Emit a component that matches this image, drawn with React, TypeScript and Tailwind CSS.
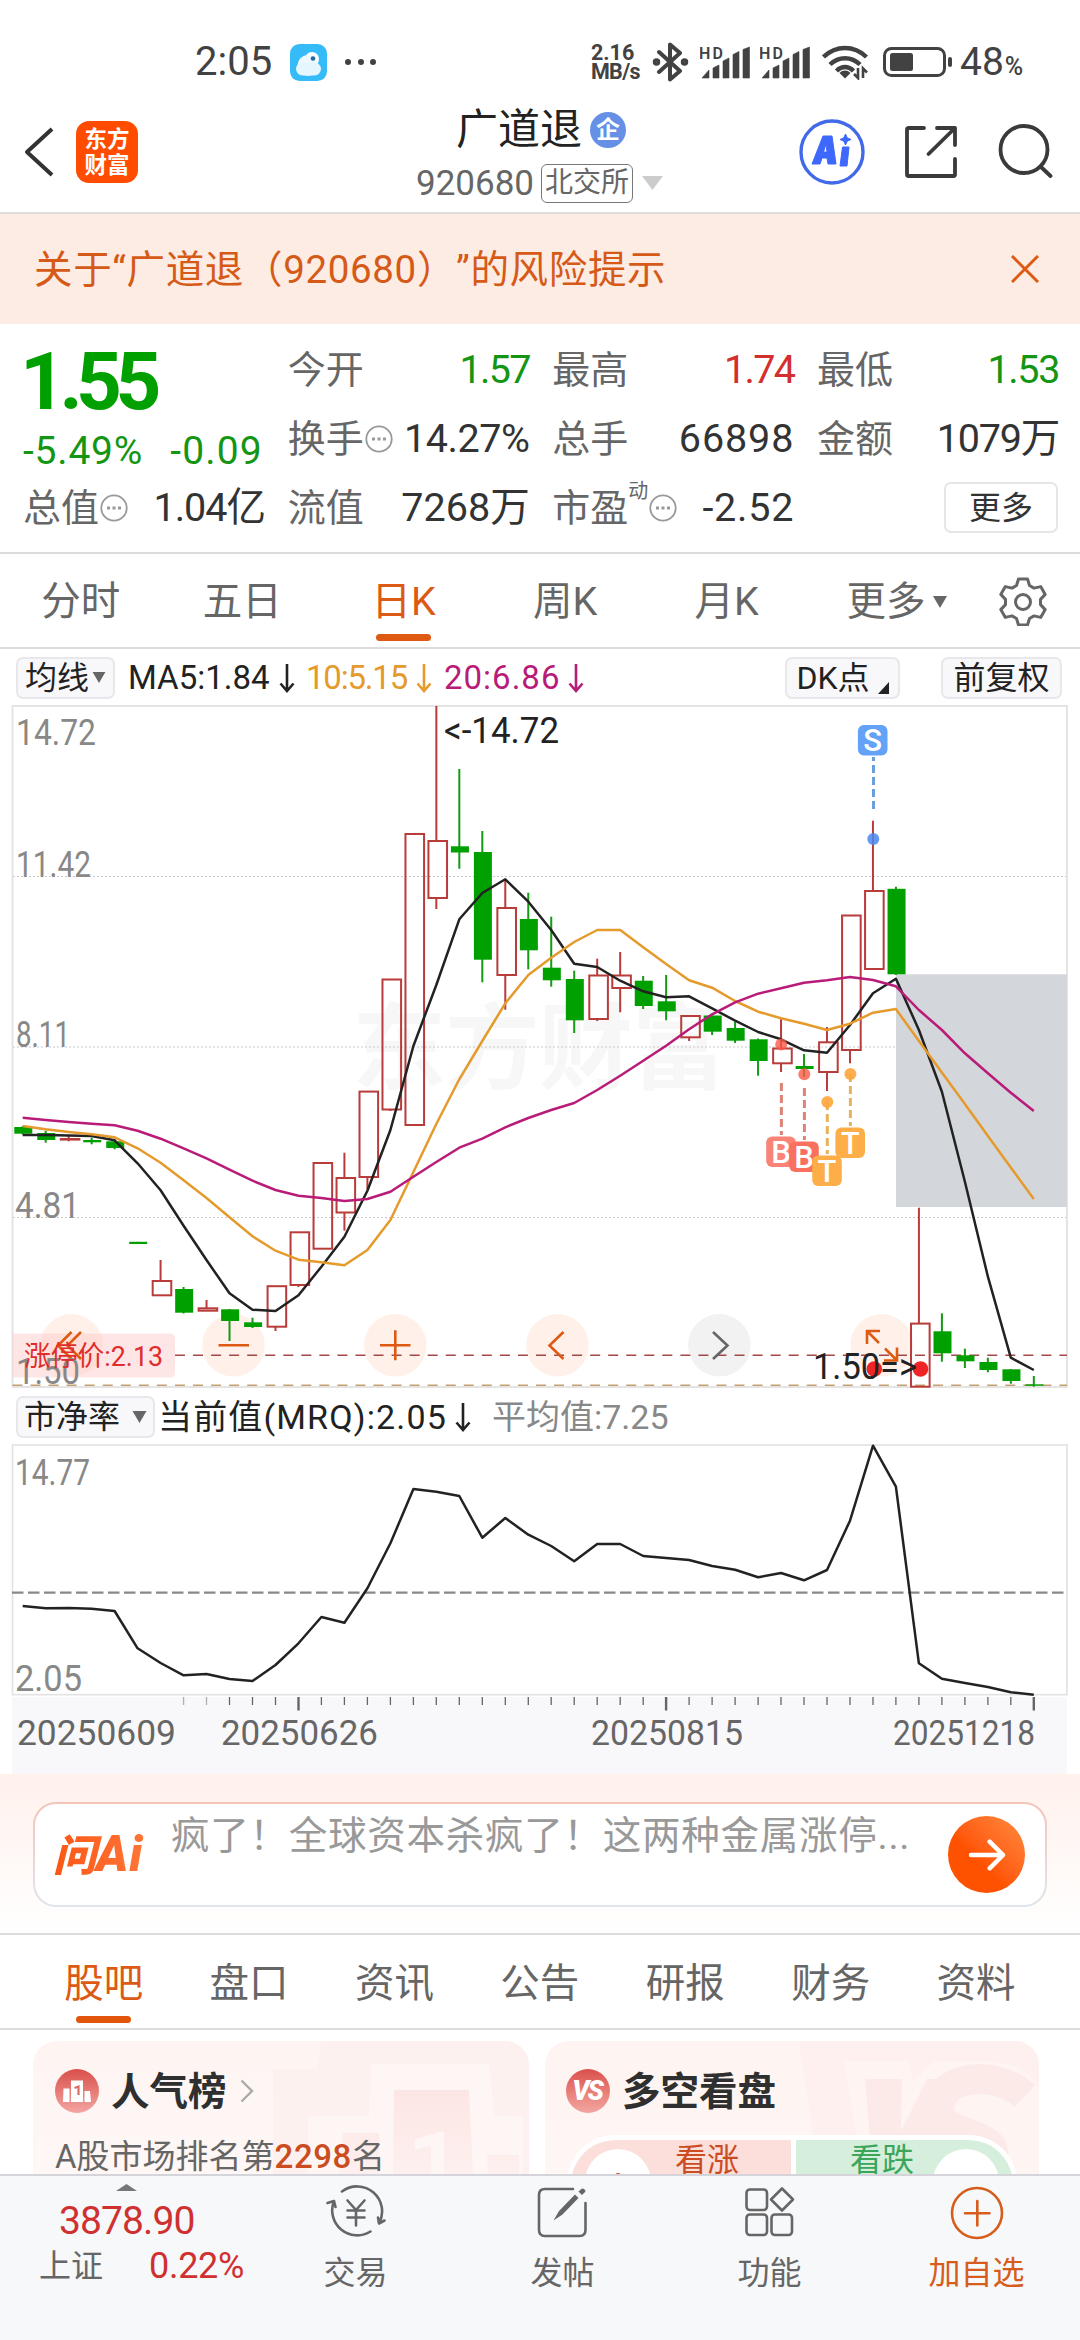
import React from 'react';

type Candle = ['r' | 'g', number, number, number, number];

// [direction, wick top, body top, body bottom, wick bottom]
const CANDLES: Candle[] = [
  ['g', 1126, 1127, 1133.7, 1134.5],
  ['g', 1130.7, 1133, 1140, 1142.7],
  ['r', 1135.6, 1138, 1140, 1141.3],
  ['g', 1137.7, 1140, 1142.3, 1144.3],
  ['g', 1139, 1141.3, 1148, 1149.3],
  ['g', 1241.8, 1241.8, 1244, 1244],
  ['r', 1260, 1280, 1296.3, 1296],
  ['g', 1287, 1289, 1312.7, 1313.5],
  ['r', 1300, 1307.3, 1311.7, 1311],
  ['g', 1309, 1309.3, 1321, 1341],
  ['g', 1317.7, 1322.3, 1327, 1328],
  ['r', 1286, 1285.2, 1327.7, 1331],
  ['r', 1232, 1231.3, 1286, 1287],
  ['r', 1163, 1162, 1249.7, 1249],
  ['r', 1152.7, 1177, 1213.5, 1230.7],
  ['r', 1091, 1090.6, 1178, 1189],
  ['r', 979, 978.5, 1110.5, 1111],
  ['r', 834, 833, 1126, 1125],
  ['r', 706, 840, 899, 909],
  ['g', 769, 846.3, 852.5, 868.7],
  ['g', 831, 852, 959.7, 982.3],
  ['r', 879.3, 907, 976, 1009.7],
  ['g', 892.7, 919, 950.3, 969.3],
  ['g', 916.7, 967.7, 980.3, 986.7],
  ['g', 970.7, 979, 1020.3, 1033],
  ['r', 958.7, 974.5, 1020, 1021],
  ['r', 952, 974.5, 989, 1012.3],
  ['g', 976, 980.7, 1006, 1009],
  ['g', 975, 1001.3, 1011.3, 1020.3],
  ['r', 1015.5, 1015, 1038.3, 1041],
  ['g', 1015.3, 1015.5, 1031.7, 1035],
  ['g', 1022, 1028, 1040.7, 1043],
  ['g', 1038.5, 1039.3, 1061, 1075.7],
  ['r', 1018.3, 1047.5, 1064.3, 1072],
  ['g', 1054, 1066, 1069, 1077],
  ['r', 1027, 1041.3, 1073, 1091],
  ['r', 915, 914.5, 1051, 1063.3],
  ['r', 820.7, 890, 970, 969],
  ['g', 886.7, 888.8, 974.3, 975],
  ['r', 1207.7, 1322.6, 1387.7, 1387],
  ['g', 1313.3, 1331.3, 1353.3, 1361.7],
  ['g', 1348.7, 1355.3, 1361.3, 1368],
  ['g', 1357.7, 1362, 1370, 1372.3],
  ['g', 1369, 1369.3, 1381, 1383.7],
  ['g', 1376, 1384.3, 1385.8, 1386.7],
];

const MA5 = [1135, 1135, 1135.5, 1136, 1140.3, 1163.3, 1190.3, 1225.7, 1260, 1293.3, 1309.7, 1311, 1295.3, 1266.7, 1236.7, 1190.7, 1130, 1046, 985, 919.3, 893, 879.3, 901.7, 930, 963.7, 967, 980.7, 991.3, 997.3, 996.3, 1008.3, 1020.7, 1032, 1039.3, 1050.3, 1052.7, 1025, 993.3, 978.7, 1030, 1091.7, 1181.7, 1276.7, 1357.7, 1370];
const MA10 = [1126, 1129.3, 1132, 1134.3, 1137.3, 1148.3, 1162.7, 1180.3, 1198, 1217.3, 1236.3, 1250.7, 1259.7, 1262.3, 1265.3, 1250, 1220, 1172, 1124, 1079.3, 1041, 1003.3, 975, 957.7, 942, 930, 930, 947.3, 964, 980.3, 987.7, 1001, 1011.7, 1018.3, 1023.7, 1030, 1023.7, 1012.7, 1009, 1041, 1072.5, 1104, 1136, 1167.5, 1199];
const MA20 = [1117.7, 1120, 1122, 1123.7, 1125.3, 1130.7, 1138.7, 1148.3, 1158.3, 1169.7, 1180.7, 1190, 1195.7, 1198, 1201, 1199, 1191.7, 1176.7, 1162, 1147.7, 1138.7, 1127.3, 1118, 1110, 1103, 1090, 1075.7, 1060.7, 1045.7, 1029.3, 1014.3, 1002.3, 993.7, 988.3, 982.7, 980.3, 977, 980, 986.3, 1010, 1030, 1053.3, 1073.3, 1092.7, 1111];
const PB = [1606, 1608.3, 1608, 1608.7, 1611, 1648.3, 1663, 1675.3, 1674, 1679, 1681, 1665, 1643.3, 1617, 1622.7, 1588.3, 1543.3, 1489, 1491.7, 1496, 1537.7, 1518, 1534.7, 1546, 1561.3, 1544, 1544, 1556, 1558, 1560, 1566, 1569.7, 1577.3, 1573, 1580.3, 1570, 1520.7, 1445.7, 1486.7, 1663.3, 1678.7, 1683, 1687, 1692.3, 1694.7];

const cx = (i: number) => 22.7 + 22.98 * i;
const line = (ys: number[]) => ys.map((y, i) => `${cx(i).toFixed(1)},${y}`).join(' ');

const FONT = 'Roboto, "Noto Sans CJK SC", sans-serif';

function Label({ x, y, w, size = 36, fill = '#888888', children }: { x: number; y: number; w: number; size?: number; fill?: string; children: string }) {
  return (
    <text x={x} y={y} textLength={w} lengthAdjust="spacingAndGlyphs" fontSize={size} fill={fill}>
      {children}
    </text>
  );
}

function Marker({ x, y, letter, color }: { x: number; y: number; letter: string; color: string }) {
  return (
    <g>
      <rect x={x - 14.8} y={y - 15} width="29.6" height="30.5" rx="6" fill={color} />
      <text x={x} y={y + 11} textAnchor="middle" fontSize="31" fontWeight="500" fill="#fff">{letter}</text>
    </g>
  );
}

function KChart() {
  return (
    <svg className="block h-[684px] w-[1080px]" viewBox="0 705 1080 684" fontFamily={FONT}>
      <text x="352" y="1082" fontSize="94" fontWeight="700" fill="#f7f7f7" textLength="374">东方财富</text>
      <g stroke="#c8c8c8" strokeWidth="1" strokeDasharray="2 2">
        <path d="M13 876.5H1067M13 1047H1067M13 1217.5H1067" />
      </g>
      <rect x="12.5" y="706" width="1054.5" height="681" fill="none" stroke="#e2e2e2" strokeWidth="1.8" />
      <rect x="896" y="974.3" width="171" height="232.7" fill="#d3d6db" />

      {[71.6, 233.5, 395.3, 557.5, 881.6].map((x) => <circle key={x} cx={x} cy="1345.3" r="31.3" fill="#fff1e9" />)}
      <circle cx="719.4" cy="1345.3" r="31.3" fill="#f2f2f2" />

      <path d="M175 1355.3H1067" stroke="#a04a48" strokeWidth="1.5" strokeDasharray="10 8.05" />
      <path d="M12.500 1333.500H170q5 0 5 5V1372.500q0 5-5 5H12.500z" fill="#ffc4c4" fillOpacity="0.42" />
      <path d="M12.5 1385.3H1067" stroke="#c4a070" strokeWidth="1.5" strokeDasharray="10 8.05" />

      <g fill="none" stroke="#de5a12" strokeWidth="2.6">
        <path d="M71.500 1332l-13.500 13.500 13.500 13.500M81 1332l-13.500 13.500 13.500 13.500" />
        <path d="M218.500 1345.300h30.500M380 1345.300h30.500M395.300 1330.300v30" />
        <path d="M563.500 1332l-14 13.500 14 13.500" />
        <path d="M713 1332l14.500 13.500-14.500 13.500" stroke="#666" />
        <path d="M880 1331h-13v13M867 1331l12 12M884 1360.500h13v-13M897 1360.500l-12-12" />
      </g>

      <Label x={16} y={745} w={80}>14.72</Label>
      <Label x={16} y={877} w={75}>11.42</Label>
      <Label x={16} y={1047} w={54}>8.11</Label>
      <Label x={15} y={1218} w={65}>4.81</Label>
      <Label x={16} y={1384} w={64}>1.50</Label>

      {CANDLES.map(([c, hi, top, bot, lo], i) => {
        const x = cx(i);
        if (c === 'g') {
          return (
            <g key={i} fill="#00a000">
              <rect x={x - 1} y={hi} width="2" height={lo - hi} fill="#149a14" />
              <rect x={x - 8.4} y={top} width="18" height={bot - top} />
            </g>
          );
        }
        return (
          <g key={i} stroke="#b83c3a" strokeWidth="2" fill="none">
            {hi < top && <path d={`M${x} ${hi}V${top + 1}`} />}
            {lo > bot && <path d={`M${x} ${bot - 1}V${lo}`} />}
            <rect x={x - 7.9} y={top + 1} width="18.6" height={Math.max(bot - top - 2, 0.6)} />
          </g>
        );
      })}

      <g fill="none" strokeWidth="2.5" strokeLinejoin="round">
        <polyline points={line(MA5)} stroke="#222" />
        <polyline points={line(MA10)} stroke="#e59a2c" />
        <polyline points={line(MA20)} stroke="#b81b78" />
      </g>

      <path d="M873.500 757V809" stroke="#6a9fdd" strokeWidth="3" strokeDasharray="8 4" strokeDashoffset="4" />
      <circle cx="873.300" cy="839" r="6" fill="#4a87ee" fillOpacity="0.85" />
      <Marker x={872.7} y={740} letter="S" color="#64a2f8" />

      <g strokeWidth="3" strokeDasharray="8 4">
        <path d="M781.400 1083V1135M804.400 1088V1140" stroke="#df8276" />
        <path d="M827.300 1102V1154M850.400 1074V1126" stroke="#e8b25c" />
      </g>
      <circle cx="781.200" cy="1044.500" r="6" fill="#fa5a48" fillOpacity="0.8" />
      <circle cx="804.300" cy="1074.300" r="6" fill="#fa5a48" fillOpacity="0.8" />
      <circle cx="827.300" cy="1102" r="6" fill="#fda63c" fillOpacity="0.9" />
      <circle cx="850.400" cy="1074" r="6" fill="#fda63c" fillOpacity="0.9" />
      <Marker x={781} y={1151.5} letter="B" color="#f98377" />
      <Marker x={804} y={1156.5} letter="B" color="#f9705f" />
      <Marker x={827} y={1170.5} letter="T" color="#feae48" />
      <Marker x={850.2} y={1142.5} letter="T" color="#feae48" />

      <Label x={444} y={743} w={115} fill="#222">&lt;-14.72</Label>
      <circle cx="874.300" cy="1369" r="7.800" fill="#f02424" />
      <circle cx="920.500" cy="1369" r="7.800" fill="#f02424" />
      <Label x={813} y={1379} w={104} fill="#222">1.50=&gt;</Label>
      <Label x={24} y={1366} w={139} size={28} fill="#e02c2c">涨停价:2.13</Label>
    </svg>
  );
}

function PbChart() {
  return (
    <svg className="block h-[330px] w-[1080px]" viewBox="0 1444 1080 330" fontFamily={FONT}>
      <rect x="12" y="1697" width="1055" height="77" fill="#f8f8fb" />
      <rect x="12.500" y="1445" width="1054.500" height="249.700" fill="none" stroke="#e2e2e2" strokeWidth="1.600" />
      <path d="M12 1592.700H1067" stroke="#888" strokeWidth="2.200" strokeDasharray="11.500 4.500" />
      <Label x={15} y={1485} w={75}>14.77</Label>
      <Label x={15} y={1691} w={67}>2.05</Label>
      <polyline points={line(PB)} fill="none" stroke="#222" strokeWidth="2.500" strokeLinejoin="round" />
      {PB.map((_, i) => {
        if (i < 7) return null;
        const big = i === 12 || i === 28 || i === 44;
        return <path key={i} d={`M${cx(i).toFixed(1)} 1697V${big ? 1710.5 : 1705}`} stroke="#666" strokeWidth={big ? 2.4 : 1.3} opacity={i < 9 ? 0.5 : 1} />;
      })}
      <Label x={17} y={1745} w={159} size={35} fill="#666">20250609</Label>
      <Label x={221} y={1745} w={157} size={35} fill="#666">20250626</Label>
      <Label x={591} y={1745} w={152} size={35} fill="#666">20250815</Label>
      <Label x={893} y={1745} w={142} size={35} fill="#666">20251218</Label>
    </svg>
  );
}

function Signal({ className }: { className: string }) {
  return (
    <svg className={`h-[36px] w-[50px] shrink-0 ${className}`} viewBox="0 0 50 36" fill="#424242">
      <text x="-1" y="14.500" fontSize="16" fontWeight="600" fontFamily="Roboto" textLength="24">HD</text>
      <path d="M2 34l7-8v8zM13 34V24l6-3v13zM23 34V17l6-3v20zM33 34V10.500l6-3V34zM43 34V5.500L49.500 3V34z" stroke="#424242" strokeWidth=".6" strokeLinejoin="round" />
    </svg>
  );
}

function StatusBar() {
  return (
    <div className="flex h-[48px] items-center text-[#424242]">
      <div className="ml-[195px] w-[77px] text-[40px] leading-none">2:05</div>
      <svg className="ml-[18px] h-[37px] w-[37px]" viewBox="0 0 37 37">
        <rect width="37" height="37" rx="9.500" fill="#35bcf8" />
        <circle cx="22" cy="15" r="7" fill="#fff" />
        <circle cx="18" cy="21.500" r="10.500" fill="#eef9ff" />
        <rect x="6" y="18.500" width="25" height="13" rx="6.500" fill="#e6f6fe" />
        <circle cx="23" cy="14.500" r="2.300" fill="#226a9a" />
      </svg>
      <div className="ml-[18px] flex w-[31px] justify-between">
        <i className="size-[6px] rounded-full bg-[#424242]" />
        <i className="size-[6px] rounded-full bg-[#424242]" />
        <i className="size-[6px] rounded-full bg-[#424242]" />
      </div>
      <div className="ml-[215px] w-[61px] text-[21.500px] leading-[19px] font-bold">
        <div>2.16</div>
        <div className="tracking-[-0.700px]">MB/s</div>
      </div>
      <svg className="h-[40px] w-[37px] shrink-0" viewBox="0 0 37 40" fill="none" stroke="#424242" strokeWidth="4" strokeLinejoin="round" strokeLinecap="round">
        <path d="M7 10l21 19-10 8.500V2.500L28 11 7 30" />
        <circle cx="4.500" cy="20" r="2" strokeWidth="3.500" />
        <circle cx="32.500" cy="20" r="2" strokeWidth="3.500" />
      </svg>
      <Signal className="ml-[11px]" />
      <Signal className="ml-[10px]" />
      <svg className="ml-[12px] h-[36px] w-[48px] shrink-0" viewBox="0 0 48 36" fill="none" stroke="#424242" strokeWidth="4.500">
        <path d="M1.500 13C14 1 32 1 44.500 13M8 20.500c8.500-8.500 21.500-8.500 30 0M14.500 27c5-5.200 12-5.200 17 0" />
        <path d="M17.500 29c3-3.300 8-3.300 11 0L23 34.500z" fill="#424242" stroke="none" />
        <path d="M36 24v10l-4-4M41 34V24.500l4 4" strokeWidth="2.600" />
      </svg>
      <svg className="ml-[13px] h-[30px] w-[70px] shrink-0" viewBox="0 0 70 30">
        <rect x="1.500" y="1.500" width="60" height="27" rx="7" fill="none" stroke="#424242" strokeWidth="3" />
        <rect x="7" y="6" width="23" height="18" rx="2.500" fill="#424242" />
        <rect x="65" y="10" width="4" height="10" rx="2" fill="#424242" />
      </svg>
      <div className="ml-[7px] flex items-baseline leading-none">
        <span className="text-[39px]">48</span>
        <span className="ml-[1px] text-[25px] font-medium">%</span>
      </div>
    </div>
  );
}

function Header() {
  return (
    <header className="h-[214px] border-b-2 border-[#dcdcdc] bg-white pt-[38px]">
      <StatusBar />
      <div className="mt-[12px] flex h-[108px] items-center">
        <svg className="ml-[24px] h-[50px] w-[30px]" viewBox="0 0 30 50" fill="none" stroke="#333" strokeWidth="4" strokeLinejoin="round">
          <path d="M28 2L3 25l25 23" />
        </svg>
        <div className="ml-[22px] flex size-[62px] flex-col items-center justify-center rounded-[13px] bg-[#ff4c00] text-[22.500px] leading-[26px] font-bold text-white">
          <span>东方</span>
          <span>财富</span>
        </div>
        <div className="ml-[278px] w-[383px]">
          <div className="flex h-[60px] items-center pt-[3px] pl-[40px]">
            <span className="text-[42px] leading-none text-[#222]">广道退</span>
            <span className="ml-[8px] flex size-[36px] items-center justify-center rounded-full bg-[#6590e6] text-[24px] leading-none font-bold text-white">企</span>
          </div>
          <div className="flex h-[48px] items-center pt-[2px]">
            <span className="w-[125px] text-[35px] leading-none text-[#666]">920680</span>
            <span className="flex h-[39px] w-[92px] items-center justify-center rounded-[6px] border-[1.5px] border-[#777] text-[28px] leading-none text-[#666]">北交所</span>
            <svg className="ml-[9px] h-[14px] w-[21px]" viewBox="0 0 21 14"><path d="M0 0h21L10.500 14z" fill="#ccc" /></svg>
          </div>
        </div>
        <svg className="h-[66px] w-[66px] shrink-0" viewBox="0 0 66 66">
          <circle cx="33" cy="33" r="31" fill="#fff" stroke="#4169e8" strokeWidth="3.400" />
          <path fillRule="evenodd" d="M13 45L24 17h9l4 28h-8l-1-6h-5l-2 6zM24.500 33h3.500l-1-8z" fill="#3d68fb" stroke="#3d68fb" strokeWidth="1" strokeLinejoin="round" />
          <path d="M43.500 28h6.500l-2 19h-7zM46.500 15l1.700 3.800L52 20.500l-3.800 1.700L46.500 26l-1.700-3.800L41 20.500l3.800-1.700z" fill="#3d68fb" stroke="#3d68fb" strokeWidth="1" strokeLinejoin="round" />
        </svg>
        <svg className="ml-[39px] h-[56px] w-[56px] shrink-0" viewBox="0 0 56 56" fill="none" stroke="#3a3a3a" strokeWidth="3.800" strokeLinecap="round" strokeLinejoin="round">
          <path d="M20 4H4.500q-1.500 0-1.500 1.500V50.500q0 1.500 1.500 1.500H49.500q1.500 0 1.500-1.500V35M33 4H51V21M51 4L24.500 30" />
        </svg>
        <svg className="ml-[37px] h-[56px] w-[56px] shrink-0" viewBox="0 0 56 56" fill="none" stroke="#3a3a3a" strokeWidth="3.800" strokeLinecap="round">
          <circle cx="27" cy="25.500" r="23.500" />
          <path d="M43.500 42.500l10 9.500" />
        </svg>
      </div>
    </header>
  );
}

function Dots() {
  return (
    <svg className="ml-[1px] h-[28px] w-[28px] shrink-0" viewBox="0 0 28 28">
      <circle cx="14" cy="14" r="12.700" fill="none" stroke="#999" strokeWidth="1.800" />
      <path d="M7 12.500h3v3H7zM12.500 12.500h3v3h-3zM18 12.500h3v3h-3z" fill="#999" />
    </svg>
  );
}

function Quote({ label, value, tone = 'text-[#333]', dots, sup, spacing = '' }: { label: string; value: string; tone?: string; dots?: boolean; sup?: string; spacing?: string }) {
  return (
    <div className="flex h-[69px] items-center justify-between whitespace-nowrap leading-none">
      <span className="flex items-center text-[38px] text-[#666]">
        {label}
        {sup && <span className="mb-[34px] text-[20px]">{sup}</span>}
        {dots && <Dots />}
      </span>
      <span className={`-mr-[2px] text-[39.500px] ${tone} ${spacing}`}>{value}</span>
    </div>
  );
}

function Quotes() {
  return (
    <section className="grid h-[230px] grid-cols-[240px_240px_240px_240px] justify-between border-b-2 border-[#dcdcdc] bg-white px-[23px] pt-[11px]">
      <div>
        <div className="-ml-[3px] flex h-[94px] items-center text-[80px] leading-none font-bold tracking-[-6.500px] text-[#00a000]">1.55</div>
        <div className="flex h-[44px] items-center justify-between text-[39px] leading-none text-[#149614]">
          <span className="tracking-[0.800px]">-5.49%</span>
          <span className="tracking-[1.200px]">-0.09</span>
        </div>
        <Quote label="总值" value="1.04亿" spacing="tracking-[-1px]" dots />
      </div>
      <div>
        <Quote label="今开" value="1.57" tone="text-[#149614]" spacing="tracking-[-1.700px]" />
        <Quote label="换手" value="14.27%" spacing="tracking-[-0.400px]" dots />
        <Quote label="流值" value="7268万" />
      </div>
      <div>
        <Quote label="最高" value="1.74" tone="text-[#d32f2f]" spacing="tracking-[-1.700px]" />
        <Quote label="总手" value="66898" spacing="tracking-[0.900px]" />
        <Quote label="市盈" sup="动" value="-2.52" spacing="tracking-[0.800px]" dots />
      </div>
      <div>
        <Quote label="最低" value="1.53" tone="text-[#149614]" spacing="tracking-[-1.400px]" />
        <Quote label="金额" value="1079万" spacing="tracking-[-1.200px]" />
        <div className="flex h-[69px] items-center justify-end">
          <span className="-mr-px flex h-[51px] w-[114px] items-center justify-center rounded-[7px] border-2 border-[#e6e6e6] text-[32px] leading-none text-[#333]">更多</span>
        </div>
      </div>
    </section>
  );
}

const PERIODS = ['分时', '五日', '日K', '周K', '月K'];

function Periods() {
  return (
    <nav className="flex h-[95px] border-b-2 border-[#dcdcdc] bg-white text-[39.500px] leading-none text-[#666]">
      {PERIODS.map((p) => (
        <div key={p} className={`flex w-[161.500px] flex-col items-center pt-[28px] ${p === '日K' ? 'text-[#dc5a14]' : ''}`}>
          <span className="h-[52px]">{p}</span>
          {p === '日K' && <i className="h-[7px] w-[55px] rounded-full bg-[#de5a12]" />}
        </div>
      ))}
      <div className="flex h-[96px] w-[190px] items-center pl-[39px]">
        更多
        <svg className="ml-[7px] h-[12px] w-[14px]" viewBox="0 0 14 12"><path d="M0 0h14L7 12z" fill="#666" /></svg>
      </div>
      <svg className="mt-[22px] h-[50px] w-[50px]" viewBox="0 0 50 50" fill="none" stroke="#666" strokeWidth="3" strokeLinejoin="round">
        <path d="M20.500 3h9l2 6.500 4.500 2.600 6.700-1.500 4.500 7.800-4.700 5v5.200l4.700 5-4.500 7.800-6.700-1.500-4.500 2.600-2 6.500h-9l-2-6.500-4.500-2.600-6.700 1.500-4.500-7.800 4.700-5v-5.200l-4.700-5 4.500-7.800 6.700 1.500 4.500-2.600z" />
        <circle cx="25" cy="26" r="7.500" />
      </svg>
    </nav>
  );
}

function Arrow({ className }: { className: string }) {
  return (
    <svg className={`h-[30px] w-[16px] shrink-0 ${className}`} viewBox="0 0 16 30" fill="none" stroke="currentColor" strokeWidth="2.600">
      <path d="M8 1v27M1.500 20.500L8 28l6.500-7.500" />
    </svg>
  );
}

const PILL = 'flex h-[42px] items-center justify-center rounded-[7px] border-2 border-[#e8e8ec] bg-[#f8f8fb] text-[32px] leading-none text-[#222]';

function Indicators() {
  return (
    <div className="flex h-[57px] items-center bg-white text-[33px] leading-none whitespace-nowrap">
      <div className={`ml-[16px] w-[99px] ${PILL}`}>
        均线<svg className="ml-[3px] h-[11px] w-[14px]" viewBox="0 0 14 12"><path d="M0 0h14L7 12z" fill="#666" /></svg>
      </div>
      <span className="ml-[13px] w-[141px] text-[#222]">MA5:1.84</span>
      <Arrow className="ml-[10px] text-[#222]" />
      <span className="ml-[11px] w-[100px] tracking-[-1.2px] text-[#e59a2c]">10:5.15</span>
      <Arrow className="ml-[10px] text-[#e59a2c]" />
      <span className="ml-[12px] w-[115px] tracking-[1px] text-[#b81b78]">20:6.86</span>
      <Arrow className="ml-[9px] text-[#b81b78]" />
      <div className={`ml-[201px] w-[115px] ${PILL}`}>
        DK点<svg className="mt-[20px] ml-[8px] h-[12px] w-[11px]" viewBox="0 0 11 12"><path d="M11 0v12H0z" fill="#222" /></svg>
      </div>
      <div className={`ml-[41px] w-[121px] ${PILL}`}>前复权</div>
    </div>
  );
}

function PbHeader() {
  return (
    <div className="flex h-[55px] items-center bg-white text-[34px] leading-none whitespace-nowrap">
      <div className={`ml-[16px] w-[139px] ${PILL}`}>
        市净率<svg className="ml-[12px] h-[12px] w-[15px]" viewBox="0 0 14 12"><path d="M0 0h14L7 12z" fill="#666" /></svg>
      </div>
      <span className="ml-[3px] w-[291px] tracking-[1.150px] text-[#222]">当前值(MRQ):2.05</span>
      <Arrow className="ml-[6px] text-[#222]" />
      <span className="ml-[21px] text-[#888]">平均值:7.25</span>
    </div>
  );
}

function AskAi() {
  return (
    <section className="h-[160px] bg-gradient-to-b from-[#fff1ec] to-white pt-[28px]">
      <div className="mx-auto h-[105px] w-[1014px] rounded-[23px] bg-gradient-to-b from-[#f3c4b8] to-[#dfe5ee] p-[2px]">
        <div className="flex h-full items-center rounded-[21px] bg-white">
          <div className="flex w-[112px] items-baseline bg-gradient-to-r from-[#f94f08] to-[#ff7636] bg-clip-text pl-[18px] leading-none font-black text-transparent italic">
            <span className="text-[43px]">问</span>
            <span className="text-[49px] tracking-[1px]">Ai</span>
          </div>
          <div className="mb-[36px] ml-[24px] w-[748px] text-[38.500px] leading-none tracking-[0.750px] whitespace-nowrap text-[#999]">疯了！全球资本杀疯了！这两种金属涨停...</div>
          <div className="ml-[29px] flex size-[77px] items-center justify-center rounded-full bg-gradient-to-tr from-[#ff5200] from-40% to-[#ff8a3c]">
            <svg className="h-[32px] w-[40px]" viewBox="0 0 42 36" fill="none" stroke="#fff" strokeWidth="5" strokeLinecap="round" strokeLinejoin="round">
              <path d="M3 18h36M24 3l15 15-15 15" />
            </svg>
          </div>
        </div>
      </div>
    </section>
  );
}

const SECTIONS = ['股吧', '盘口', '资讯', '公告', '研报', '财务', '资料'];

function Sections() {
  return (
    <nav className="flex h-[97px] border-y-2 border-[#dcdcdc] bg-white pl-[31px] text-[39.500px] leading-none text-[#666]">
      {SECTIONS.map((s, i) => (
        <div key={s} className={`flex w-[145.400px] flex-col items-center pt-[29px] ${i === 0 ? 'text-[#dc5a14]' : ''}`}>
          <span className="h-[52px]">{s}</span>
          {i === 0 && <i className="h-[7px] w-[55px] rounded-full bg-[#e2560c]" />}
        </div>
      ))}
    </nav>
  );
}

function Cards() {
  return (
    <section className="flex h-[144px] gap-[16px] overflow-hidden bg-white px-[33px] pt-[11px]">
      <div className="relative h-[300px] w-[496px] overflow-hidden rounded-[24px] bg-gradient-to-b from-[#fef5f3] to-[#fffaf8] px-[22px] pt-[28px]">
        <svg className="absolute top-0 right-0 h-[134px] w-[256px]" viewBox="0 0 256 134">
          <defs>
            <linearGradient id="pod" x1="0" y1="0" x2="0" y2="1"><stop offset="0" stopColor="#fce6e5" /><stop offset="1" stopColor="#fdf0ee" /></linearGradient>
          </defs>
          <path d="M48 0H256V134H0V28H44z" fill="#fdf1ef" />
          <path d="M98 23H216l6 52h28v59H35V75H96z" fill="#fef6f4" />
          <path d="M121 49h75l4 85h-80zM70 92h36v42H66zM214 114h32v20h-31z" fill="url(#pod)" />
          <path d="M142 98l29-8v44h-13v-29l-16 4z" fill="#fef6f4" />
        </svg>
        <div className="relative flex h-[44px] items-center">
          <svg className="h-[44px] w-[44px]" viewBox="0 0 44 44">
            <defs><linearGradient id="redA" x1="0" y1="0" x2="0" y2="1"><stop offset="0" stopColor="#d94f4b" /><stop offset="1" stopColor="#f3a6a2" /></linearGradient></defs>
            <circle cx="22" cy="22" r="22" fill="url(#redA)" />
            <path d="M8.500 19.500h6V33H8zM16 11.500h12V33H16zM29.500 22h5.500l1 11h-6.500z" fill="#fff" />
            <path d="M19.500 19l4-1.500v8.500" fill="none" stroke="#dd6b67" strokeWidth="2.200" />
          </svg>
          <h3 className="mt-[2px] ml-[12px] text-[38.500px] leading-none font-bold text-[#2f2f2f]">人气榜</h3>
          <svg className="ml-[13px] h-[24px] w-[14px]" viewBox="0 0 14 24" fill="none" stroke="#aaa" strokeWidth="2.400"><path d="M1.500 1.500L12 12 1.500 22.500" /></svg>
        </div>
        <div className="relative mt-[27px] flex text-[33px] leading-[34px] whitespace-nowrap text-[#666]">
          A股市场排名第<b className="font-medium tracking-[0.600px] text-[#cc4c22]">2298</b>名
        </div>
      </div>
      <div className="relative h-[300px] w-[494px] overflow-hidden rounded-[24px] bg-gradient-to-b from-[#fef4f2] to-[#fffaf8] px-[21px] pt-[28px]">
        <svg className="absolute top-0 right-0 h-[134px] w-[242px]" viewBox="0 0 242 134">
          <path d="M2 0H242V134H22z" fill="#fdf0ee" />
          <path d="M47 20H112l4 20 22-20H190q40 2 52 28V134H66z" fill="#fef5f3" />
          <path d="M68 38h37l-1 52 26-52h40L118 134H76z" fill="#fceae8" />
          <path d="M228 55c-30-28-88-20-86 14 2 26 56 22 54 44-1 12-20 16-38 21" fill="none" stroke="#fceae8" strokeWidth="30" />
        </svg>
        <div className="relative flex h-[44px] items-center">
          <div className="flex size-[44px] items-center justify-center rounded-full bg-gradient-to-b from-[#d94f4b] to-[#f3a6a2] pr-[2px] text-[27px] leading-none font-black tracking-[-2px] text-white italic">VS</div>
          <h3 className="mt-[2px] ml-[12px] text-[38.500px] leading-none font-bold text-[#2f2f2f]">多空看盘</h3>
        </div>
        <div className="relative mx-[1px] mt-[22px] w-[450px] rounded-t-[48px] bg-white px-[4px] pt-[5px]">
          <div className="flex h-[90px] gap-[5px] overflow-hidden rounded-t-[44px] text-[32px] leading-none">
            <div className="flex w-[220px] rounded-tl-[44px] bg-[#fcdedb]">
              <div className="mt-[9px] ml-[14px] flex size-[66px] justify-center rounded-full bg-white pt-[24px]"><i className="size-[6px] rounded-full bg-[#cc4c22]" /></div>
              <span className="mt-[4px] ml-[24px] text-[#cc4c22]">看涨</span>
            </div>
            <div className="flex flex-1 justify-end rounded-tr-[44px] bg-[#d6efdc]">
              <span className="mt-[4px] mr-[19px] text-[#3ca55c]">看跌</span>
              <div className="mt-[9px] mr-[14px] size-[66px] rounded-full bg-white" />
            </div>
          </div>
        </div>
      </div>
    </section>
  );
}

function NavItem({ label, className, children }: { label: string; className: string; children: React.ReactNode }) {
  return (
    <div className={`flex w-[207px] flex-col items-center ${className}`}>
      <svg className="mt-[7px] h-[60px] w-[60px]" viewBox="0 0 60 60" fill="none" stroke="currentColor" strokeWidth="2.600" strokeLinejoin="round" strokeLinecap="round">
        {children}
      </svg>
      <span className="mt-[14px] text-[32px] leading-none">{label}</span>
    </div>
  );
}

function BottomBar() {
  return (
    <footer className="flex h-[166px] border-t-2 border-[#d4d4da] bg-[#f7f8fa] text-[#666]">
      <div className="w-[252px] leading-none">
        <svg className="mt-[8px] ml-[116px] h-[7px] w-[21px]" viewBox="0 0 21 7"><path d="M0 7h21L10.500 0z" fill="#777" /></svg>
        <div className="mt-[11px] ml-[59px] text-[39px] tracking-[-0.900px] text-[#cf3030]">3878.90</div>
        <div className="mt-[7px] flex items-center">
          <span className="ml-[39px] text-[32px]">上证</span>
          <span className="ml-[46px] text-[36px] tracking-[-0.300px] text-[#cf3030]">0.22%</span>
        </div>
      </div>
      <NavItem label="交易" className="">
        <path d="M16 8.500A25 25 0 0 1 53 40.500M53 40.500l-1-6M53 40.500l5.500-3M44.500 48.500A25 25 0 0 1 8 18M8 18l-6.500 2M8 18l1.500 6" />
        <path d="M21.500 17.500l8.500 9.500 8.500-9.500M21.500 27.500h17M21.500 34.500h17M30 27v15.500" />
      </NavItem>
      <NavItem label="发帖" className="">
        <path d="M40 6H12q-6 0-6 6V47q0 6 6 6H46.500q6 0 6-6V20" />
        <path d="M20.500 37.500l5.500-9.500L42 11.500l3.500 3.500-16 16.500zM45.500 8.500l3.500-3q3 0 3.500 3l-3.500 3.500z" fill="currentColor" stroke="none" />
      </NavItem>
      <NavItem label="功能" className="">
        <rect x="6.500" y="6.500" width="20.500" height="20.500" rx="3.500" />
        <rect x="6.500" y="31.500" width="20.500" height="20.500" rx="3.500" />
        <rect x="31.500" y="31.500" width="20.500" height="20.500" rx="3.500" />
        <path d="M42 5.500L53 16.500 42 27.500 31 16.500z" />
      </NavItem>
      <NavItem label="加自选" className="text-[#d65d1c]">
        <circle cx="30" cy="30" r="25" />
        <path d="M18 30.300h24.500M30.300 18v24.500" />
      </NavItem>
    </footer>
  );
}

export default function App() {
  return (
    <main className="h-[2340px] w-[1080px] overflow-hidden bg-white font-[Roboto,'Noto_Sans_CJK_SC',sans-serif]">
      <Header />
      <div className="flex h-[110px] items-center justify-between bg-[#fdece3] pr-[41px] pl-[34px] text-[38.500px] leading-none text-[#d55a18]">
        <span className="mt-[2px] tracking-[0.650px] whitespace-nowrap [text-spacing-trim:space-all]">关于“广道退（920680）”的风险提示</span>
        <svg className="h-[28px] w-[28px]" viewBox="0 0 28 28" fill="none" stroke="#de5a12" strokeWidth="3"><path d="M1 1l26 26M27 1L1 27" /></svg>
      </div>
      <Quotes />
      <Periods />
      <Indicators />
      <div className="-mt-px">
        <KChart />
      </div>
      <PbHeader />
      <PbChart />
      <AskAi />
      <div className="-mt-px">
        <Sections />
      </div>
      <Cards />
      <BottomBar />
    </main>
  );
}
